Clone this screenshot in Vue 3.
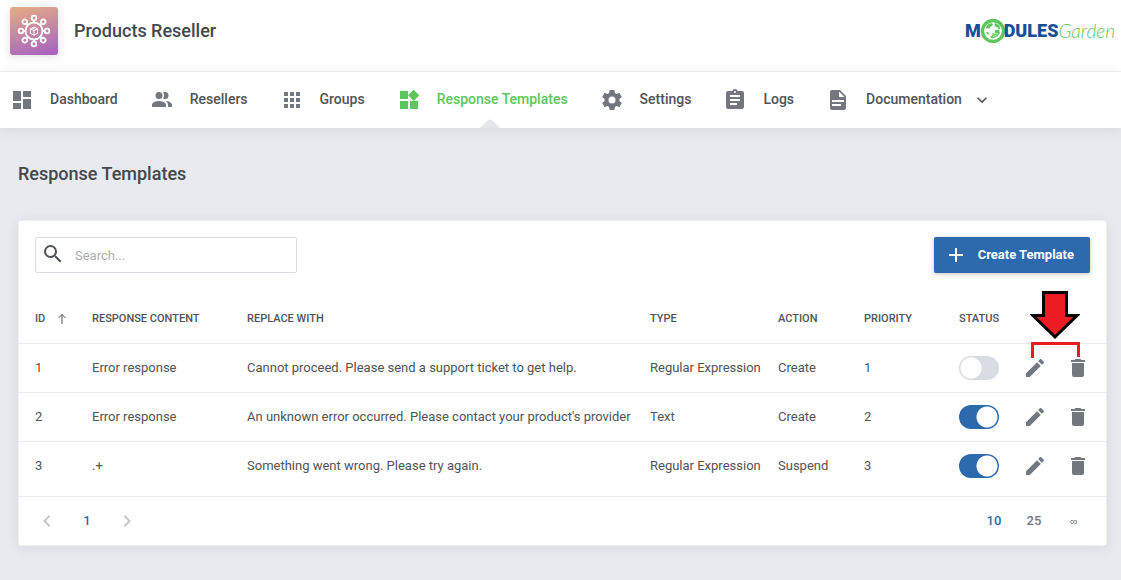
<script setup>
import { ref } from 'vue'

const icons = {
  dashboard: 'M13 3v6h8V3m-8 18h8V11h-8M3 21h8v-6H3m0-2h8V3H3v10z',
  resellers: 'M16 17v2H2v-2s0-4 7-4 7 4 7 4m-3.5-9.5A3.5 3.5 0 1 0 9 11a3.5 3.5 0 0 0 3.500-3.500m3.440 5.500A5.320 5.320 0 0 1 18 17v2h4v-2s0-3.630-6.060-4M15 4a3.390 3.390 0 0 0-1.930.590 5 5 0 0 1 0 5.820A3.390 3.390 0 0 0 15 11a3.500 3.500 0 0 0 0-7z',
  groups: 'M16 20h4v-4h-4m0-2h4v-4h-4m-6-2h4V4h-4m6 4h4V4h-4m-6 10h4v-4h-4m-6 4h4v-4H4m0 10h4v-4H4m6 4h4v-4h-4M4 8h4V4H4v4z',
  templates: 'M3 3v8h8V3M3 13v8h8v-8m2 8h8v-8h-8m3.660-11.310L11 7.340 16.660 13l5.650-5.660z',
  settings: 'M12 15.500A3.500 3.500 0 0 1 8.500 12 3.500 3.500 0 0 1 12 8.500a3.500 3.500 0 0 1 3.500 3.500 3.500 3.500 0 0 1-3.500 3.500m7.430-2.530c.040-.320.070-.640.070-.970s-.030-.660-.070-1l2.110-1.630c.190-.150.240-.420.120-.640l-2-3.460c-.120-.220-.390-.310-.610-.220l-2.490 1c-.520-.390-1.060-.730-1.690-.980l-.370-2.650A.506.506 0 0 0 14 2h-4c-.250 0-.460.180-.500.420l-.370 2.650c-.630.250-1.170.590-1.690.980l-2.490-1c-.220-.090-.490 0-.610.220l-2 3.460c-.130.220-.070.490.120.640L4.570 11c-.040.340-.070.670-.070 1s.030.650.070.970l-2.110 1.660c-.190.150-.250.420-.120.640l2 3.460c.120.220.390.300.610.220l2.490-1.010c.520.400 1.060.740 1.690.990l.370 2.650c.040.240.250.420.500.420h4c.250 0 .460-.180.500-.420l.370-2.650c.630-.260 1.170-.590 1.690-.990l2.490 1.010c.220.080.490 0 .610-.220l2-3.460c.120-.220.070-.490-.120-.640z',
  logs: 'M17 9H7V7h10m0 6H7v-2h10m-3 6H7v-2h7M12 3a1 1 0 1 1 0 2 1 1 0 0 1 0-2m7 0h-4.180C14.400 1.840 13.300 1 12 1s-2.400.840-2.820 2H5a2 2 0 0 0-2 2v14a2 2 0 0 0 2 2h14a2 2 0 0 0 2-2V5a2 2 0 0 0-2-2z',
  docs: 'M13 9h5.500L13 3.500V9M6 2h8l6 6v12a2 2 0 0 1-2 2H6a2 2 0 0 1-2-2V4a2 2 0 0 1 2-2m9 16v-2H6v2h9m3-4v-2H6v2h12z',
  down: 'M7.410 8.580L12 13.170l4.590-4.590L18 10l-6 6-6-6z',
  left: 'M15.410 16.580L10.830 12l4.580-4.590L14 6l-6 6 6 6z',
  right: 'M8.590 16.580L13.170 12 8.590 7.410 10 6l6 6-6 6z',
  search: 'M9.500 3A6.500 6.500 0 0 1 16 9.500c0 1.610-.590 3.090-1.560 4.230l.270.270h.790l5 5-1.500 1.500-5-5v-.790l-.270-.270A6.516 6.516 0 0 1 9.500 16a6.500 6.500 0 0 1 0-13m0 2C7 5 5 7 5 9.500S7 14 9.500 14 14 12 14 9.500 12 5 9.500 5z',
  pencil: 'M20.710 7.040c.390-.390.390-1.040 0-1.410l-2.340-2.340c-.370-.390-1.020-.390-1.410 0l-1.840 1.830 3.750 3.750M3 17.250V21h3.750L17.810 9.930l-3.750-3.750z',
  trash: 'M19 4h-3.500l-1-1h-5l-1 1H5v2h14M6 19a2 2 0 0 0 2 2h8a2 2 0 0 0 2-2V7H6v12z',
}

const nav = [
  { label: 'Dashboard', icon: 'dashboard' },
  { label: 'Resellers', icon: 'resellers' },
  { label: 'Groups', icon: 'groups' },
  { label: 'Response Templates', icon: 'templates', active: true },
  { label: 'Settings', icon: 'settings' },
  { label: 'Logs', icon: 'logs' },
  { label: 'Documentation', icon: 'docs', menu: true },
]

const rows = ref([
  { id: 1, content: 'Error response', replace: 'Cannot proceed. Please send a support ticket to get help.', type: 'Regular Expression', action: 'Create', priority: 1, on: false },
  { id: 2, content: 'Error response', replace: "An unknown error occurred. Please contact your product's provider", type: 'Text', action: 'Create', priority: 2, on: true },
  { id: 3, content: '.+', replace: 'Something went wrong. Please try again.', type: 'Regular Expression', action: 'Suspend', priority: 3, on: true },
])

const query = ref('')
const spokes = [0, 45, 90, 135, 180, 225, 270, 315]
</script>

<template>
  <div class="page">
    <header class="top">
      <div class="brand">
        <span class="app-icon">
          <svg viewBox="0 0 48 48" fill="none" stroke="#fff">
            <circle cx="24" cy="24" r="8.500" stroke-width="1.800" />
            <g v-for="a in spokes" :key="a" :transform="`rotate(${a} 24 24)`" stroke-width="1.800">
              <path d="M24 15.500v-2" />
              <circle cx="24" cy="11" r="2.300" />
            </g>
            <path d="M24 20l3.600 1.800v4.600L24 28.200l-3.600-1.800v-4.600zM20.400 21.800l3.600 1.800 3.600-1.800M24 23.600v4.600M22.200 20.900l3.600 1.800" stroke-width="1" />
          </svg>
        </span>
        <h1>Products Reseller</h1>
      </div>
      <a class="vendor" href="#" aria-label="ModulesGarden">
        <span class="heavy">M</span>
        <svg class="globe" viewBox="0 0 26 26">
          <circle cx="13" cy="13" r="10.500" fill="#fff" stroke="#5cc75c" stroke-width="3.300" />
          <path d="M5.500 11l1.500-4 4-2 2 1-1 2-2 1-1 2-2-1zM15 5l4 2 1.500 4-2 0-1-2-2 0-1-2zM15 12l4 0 1 3-3 4-5 1.500-2-2 2-1 0-2 3-1zM6 14l2 0 1 2-1 1z" fill="#5cc75c" />
          <path d="M12 17q3-3 6-1M13 19q2-2 4-1" fill="none" stroke="#fff" stroke-width="0.700" />
        </svg>
        <span class="heavy">DULES</span><span class="thin">Garden</span>
      </a>
    </header>

    <nav class="nav">
      <a v-for="n in nav" :key="n.label" href="#" :class="{ active: n.active }">
        <svg class="icon" viewBox="0 0 24 24"><path :d="icons[n.icon]" /></svg>
        <span class="label">{{ n.label }}</span>
        <svg v-if="n.menu" class="caret" viewBox="0 0 24 24"><path :d="icons.down" /></svg>
        <svg v-if="n.active" class="notch" viewBox="0 0 20 9"><path d="M0 9L8 1Q10 0 12 1L20 9z" /></svg>
      </a>
    </nav>

    <main>
      <h2>Response Templates</h2>
      <section class="card">
        <div class="toolbar">
          <label class="search">
            <svg class="icon" viewBox="0 0 24 24"><path :d="icons.search" /></svg>
            <input v-model="query" type="text" placeholder="Search..." aria-label="Search" />
          </label>
          <button class="create" type="button">
            <svg viewBox="0 0 16 16"><path d="M8 1v14M1 8h14" /></svg>
            <span>Create Template</span>
          </button>
        </div>

        <table>
          <colgroup>
            <col class="c-id" /><col class="c-content" /><col />
            <col class="c-type" /><col class="c-action" /><col class="c-priority" />
            <col class="c-status" /><col class="c-tools" />
          </colgroup>
          <thead>
            <tr>
              <th>
                <span class="sort">ID
                  <svg viewBox="0 0 10 12"><path d="M5 11V1.500M1.500 5L5 1.500 8.500 5" /></svg>
                </span>
              </th>
              <th>RESPONSE CONTENT</th>
              <th>REPLACE WITH</th>
              <th>TYPE</th>
              <th>ACTION</th>
              <th>PRIORITY</th>
              <th>STATUS</th>
              <td></td>
            </tr>
          </thead>
          <tbody>
            <tr v-for="(r, i) in rows" :key="r.id">
              <td>{{ r.id }}</td>
              <td>{{ r.content }}</td>
              <td>{{ r.replace }}</td>
              <td>{{ r.type }}</td>
              <td>{{ r.action }}</td>
              <td>{{ r.priority }}</td>
              <td><input v-model="r.on" class="switch" type="checkbox" :aria-label="`Status of template ${r.id}`" /></td>
              <td>
                <div class="tools">
                  <button type="button" aria-label="Edit"><svg class="icon" viewBox="0 0 24 24"><path :d="icons.pencil" /></svg></button>
                  <button type="button" aria-label="Delete"><svg class="icon" viewBox="0 0 24 24"><path :d="icons.trash" /></svg></button>
                  <svg v-if="i === 0" class="pointer" viewBox="0 0 50 70">
                    <path d="M13.500 3.500h23v23h10.500L25 48 3 26.500h10.500z" fill="#ed1c24" stroke="#000" stroke-width="3" />
                    <path d="M2.500 69V54.500h46V68" fill="none" stroke="#ed1c24" stroke-width="3" />
                  </svg>
                </div>
              </td>
            </tr>
          </tbody>
        </table>

        <footer class="pager">
          <div class="pages">
            <button type="button" aria-label="Previous page"><svg viewBox="0 0 24 24"><path :d="icons.left" /></svg></button>
            <button type="button" class="current">1</button>
            <button type="button" aria-label="Next page"><svg viewBox="0 0 24 24"><path :d="icons.right" /></svg></button>
          </div>
          <div class="pages">
            <button type="button" class="current">10</button>
            <button type="button">25</button>
            <button type="button" class="all">∞</button>
          </div>
        </footer>
      </section>
    </main>
  </div>
</template>

<style>
body {
  background: #e9eaef;
}
</style>

<style scoped>
.page {
  min-height: 100vh;
  color: #505459;
  font: 13px/20px Roboto, "Liberation Sans", sans-serif;
}
.page * {
  box-sizing: border-box;
}
svg {
  display: block;
  flex: none;
}
.icon {
  width: 24px;
  height: 24px;
  fill: #737780;
}
a {
  color: inherit;
  text-decoration: none;
}
button {
  padding: 0;
  border: 0;
  background: none;
  color: inherit;
  font: inherit;
}
h1,
h2 {
  margin: 0;
  color: #43474d;
  font-size: 18px;
  font-weight: 500;
  line-height: 24px;
}
.top {
  display: flex;
  justify-content: space-between;
  align-items: flex-start;
  padding: 7px 6px 16px 10px;
  border-bottom: 1px solid #f0f0f2;
  background: #fff;
}
.brand {
  display: flex;
  align-items: center;
  gap: 16px;
}
.app-icon {
  width: 48px;
  height: 48px;
  border-radius: 3px;
  background: linear-gradient(165deg, #e5ad83, #a560c4);
  box-shadow: 0 2px 8px rgba(60, 60, 90, 0.15);
}
.vendor {
  display: flex;
  align-items: center;
  height: 48px;
}
.heavy {
  color: #164f98;
  font-size: 18px;
  font-weight: 900;
}
.thin {
  color: #5cc75c;
  font-family: Lato, sans-serif;
  font-size: 19px;
  font-style: italic;
  font-weight: 300;
}
.globe {
  width: 26px;
  height: 26px;
  margin: 0 -2px 0 -1px;
}
.nav {
  display: flex;
  gap: 32px;
  height: 56px;
  padding: 0 10px;
  background: #fff;
  box-shadow: 0 2px 12px rgba(60, 60, 90, 0.1);
}
.nav a {
  position: relative;
  display: flex;
  align-items: center;
  gap: 16px;
  font-size: 14px;
  font-weight: 500;
  white-space: nowrap;
}
.label {
  padding-bottom: 2px;
}
.nav .active {
  color: #5cc75c;
}
.nav .active .icon {
  fill: #5cc75c;
}
.nav .caret {
  width: 20px;
  height: 20px;
  margin-left: -6px;
  fill: #505459;
}
.notch {
  position: absolute;
  bottom: 0;
  left: calc(50% - 2px);
  width: 20px;
  height: 9px;
  fill: #e5e6eb;
}
main {
  padding: 34px 14px 34px 18px;
}
.card {
  margin-top: 34px;
  border: 1px solid #eeeff2;
  border-radius: 3px;
  background: #fff;
  box-shadow: 0 2px 12px rgba(60, 60, 90, 0.1);
}
.toolbar {
  display: flex;
  justify-content: space-between;
  padding: 16px 16px 20px;
}
.search {
  display: flex;
  gap: 8px;
  width: 262px;
  height: 36px;
  padding: 4px 5px;
  border: 1px solid #d9dbe7;
  border-radius: 2px;
}
.search .icon {
  fill: #505459;
}
.search input {
  min-width: 0;
  flex: 1;
  padding: 2px 2px 0;
  border: 0;
  outline: 0;
  background: none;
  color: inherit;
  font: inherit;
}
.search input::placeholder {
  color: #abadb3;
}
.create {
  display: flex;
  align-items: center;
  gap: 14px;
  height: 36px;
  padding: 0 16px 0 14px;
  border-radius: 2px;
  background: #2d69ad;
  box-shadow: 0 1px 4px rgba(0, 0, 0, 0.25);
  color: #fff;
  font-weight: 700;
}
.create svg {
  width: 16px;
  height: 16px;
  fill: none;
  stroke: #fff;
  stroke-width: 2;
}
table {
  width: 100%;
  border-collapse: separate;
  border-spacing: 0;
  table-layout: fixed;
}
.c-id { width: 65px; }
.c-content { width: 155px; }
.c-type { width: 128px; }
.c-action { width: 86px; }
.c-priority { width: 95px; }
.c-status { width: 64px; }
.c-tools { width: 91px; }
th,
td {
  height: 49px;
  padding: 0 0 0 8px;
  border-bottom: 1px solid #eaebef;
  text-align: left;
  white-space: nowrap;
}
th {
  height: 51px;
  padding-top: 2px;
  font-size: 11px;
  font-weight: 500;
}
th:first-child,
td:first-child {
  padding-left: 16px;
}
tbody tr:last-child td {
  height: 48px;
  border-bottom: 0;
}
.sort {
  display: flex;
  align-items: center;
  gap: 12px;
}
.sort svg {
  width: 10px;
  height: 12px;
  fill: none;
  stroke: #505459;
}
.switch {
  display: block;
  width: 40px;
  height: 24px;
  margin: 0;
  appearance: none;
  border-radius: 12px;
  background: radial-gradient(circle at 12px 12px, #fff 10px, #d9dbe5 11px);
}
.switch:checked {
  background: radial-gradient(circle at 28px 12px, #fff 10px, #2d69ad 11px);
}
.tools {
  position: relative;
  display: flex;
  gap: 19px;
}
.pointer {
  position: absolute;
  right: 26px;
  bottom: 21px;
  width: 50px;
  height: 70px;
}
.pager {
  display: flex;
  justify-content: space-between;
  margin-top: 6px;
  padding: 8px 16px 8px 12px;
  border-top: 1px solid #eaebef;
}
.pages {
  display: flex;
  gap: 8px;
}
.pages button {
  display: flex;
  justify-content: center;
  align-items: center;
  width: 32px;
  height: 32px;
  font-weight: 500;
  color: #737780;
}
.pages svg {
  width: 24px;
  height: 24px;
  fill: #c8c9ce;
}
.pages .current {
  color: #2d69ad;
}
.pages .all {
  font-family: "Liberation Sans", sans-serif;
  font-size: 11px;
}
</style>
